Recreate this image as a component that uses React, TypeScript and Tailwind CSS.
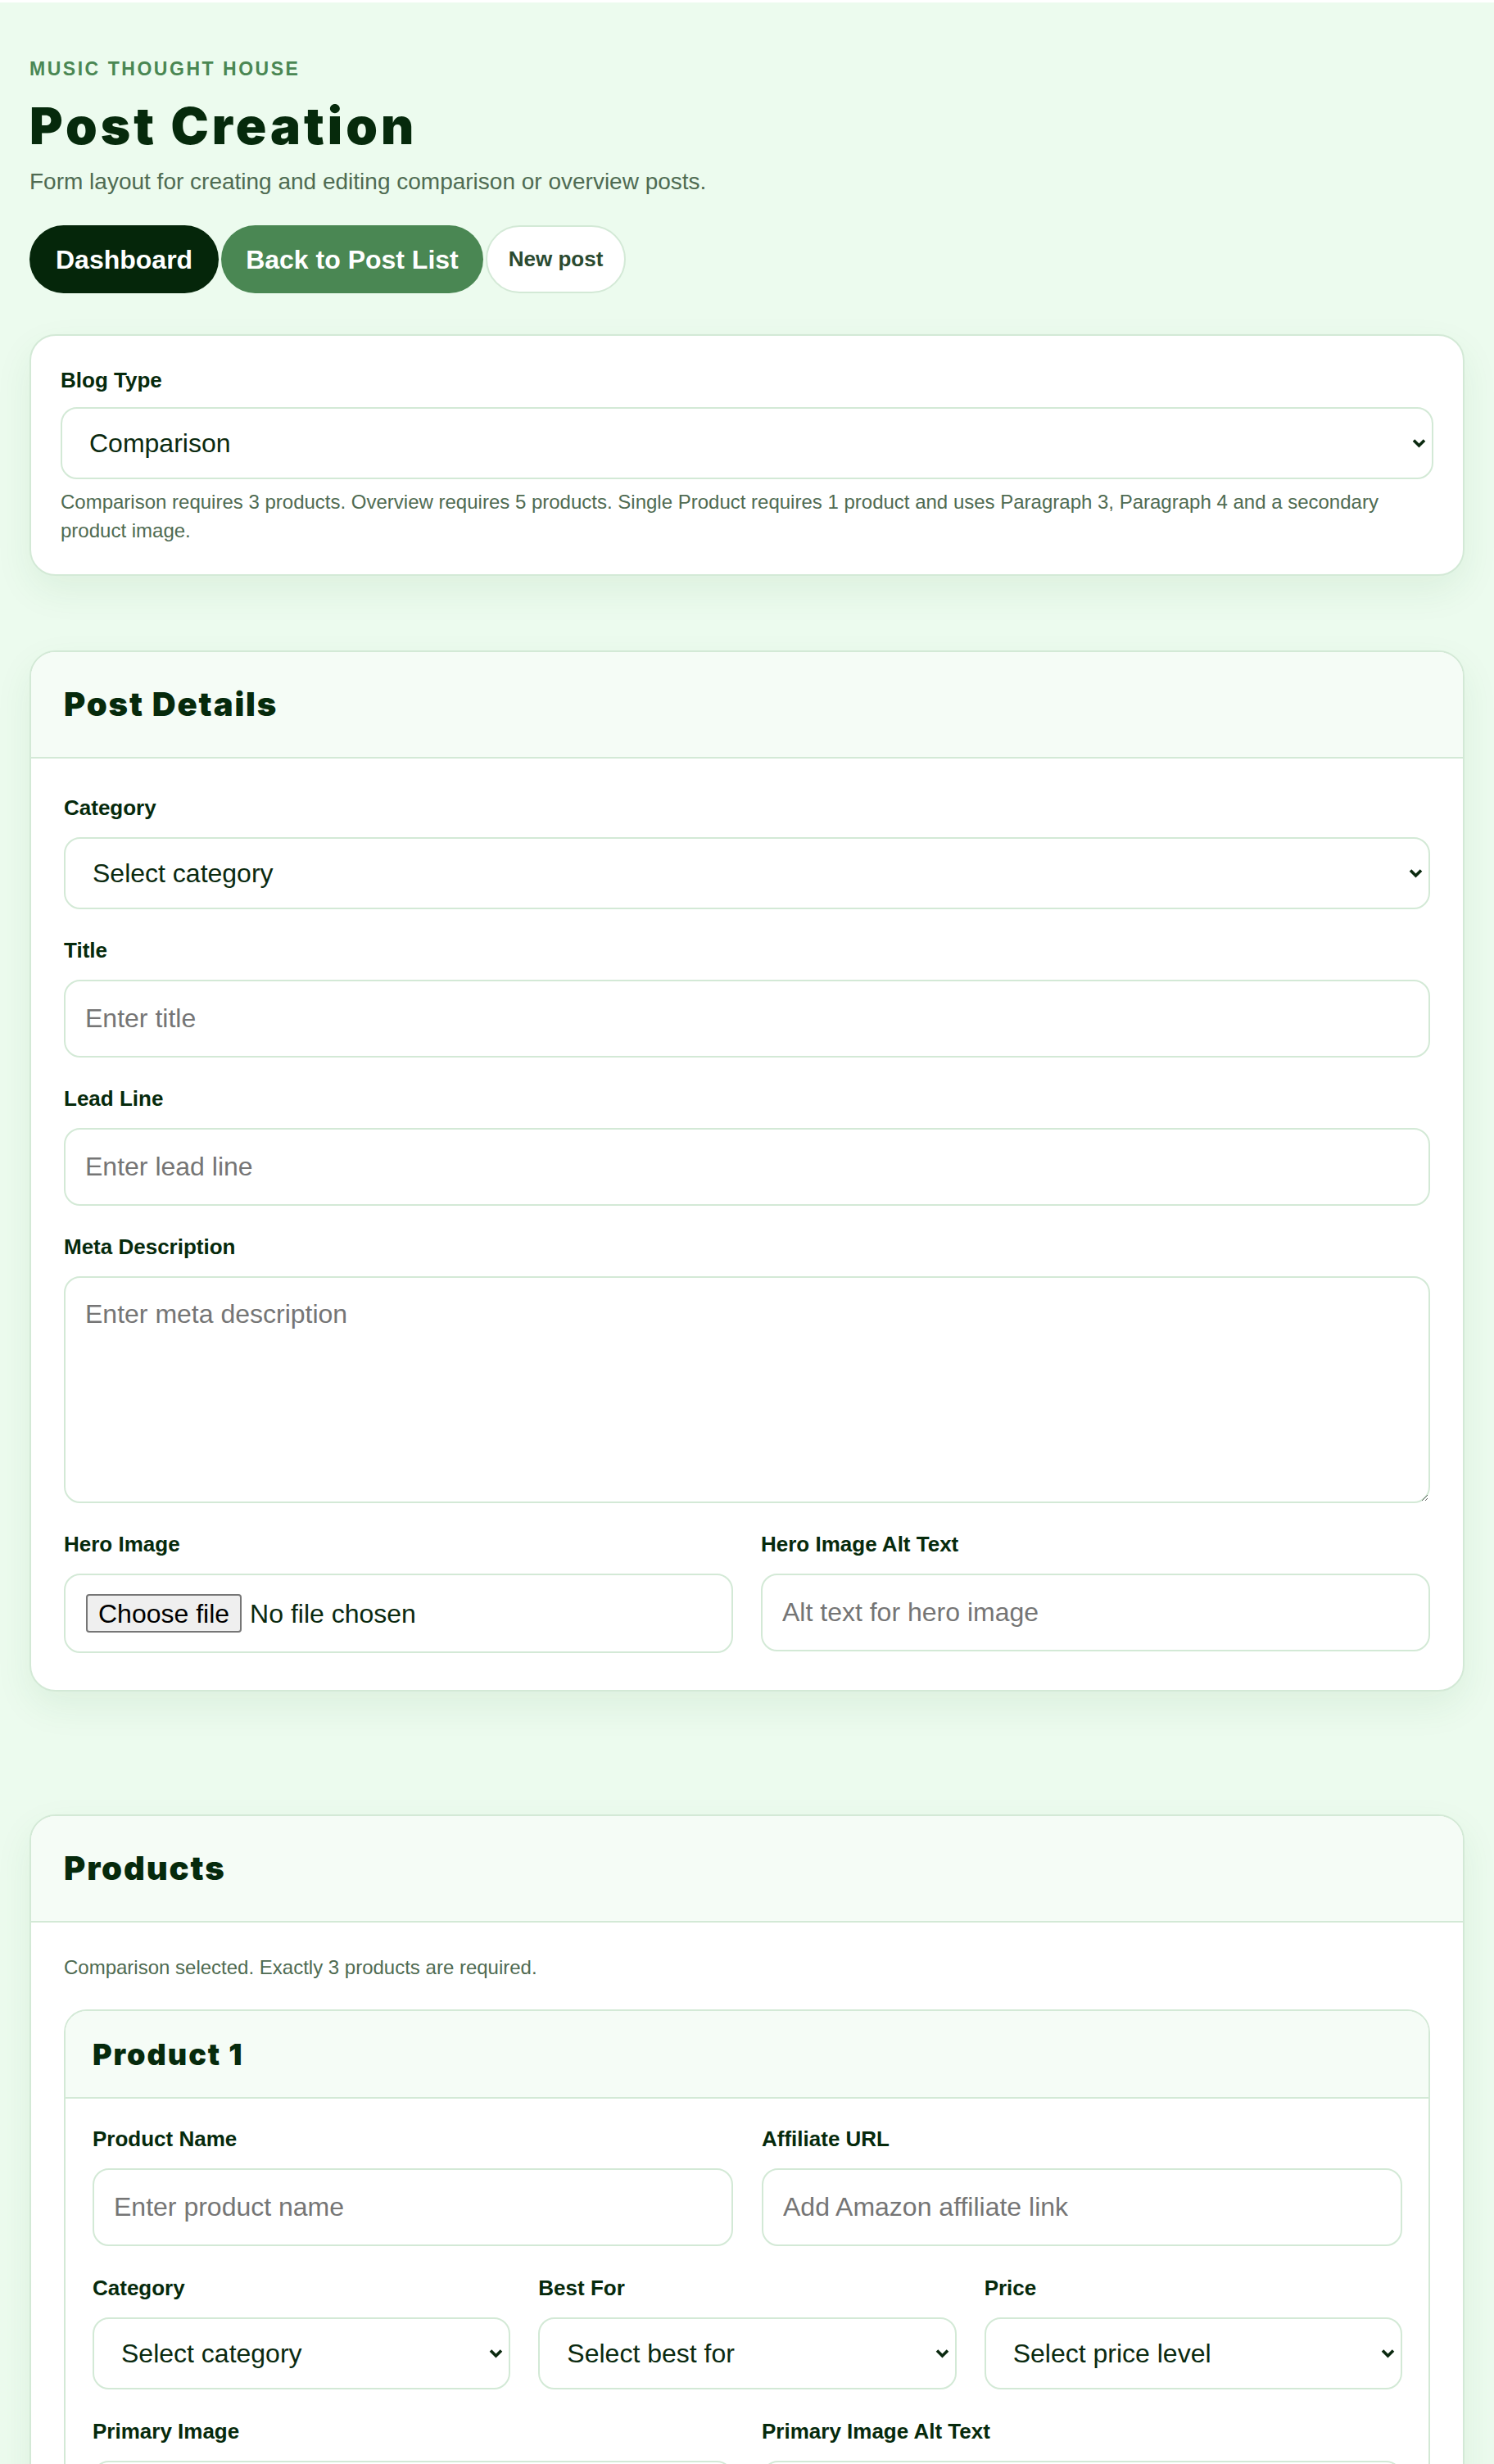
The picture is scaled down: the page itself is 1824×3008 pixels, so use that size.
import React from "react";

// shared field styles
const labelCls =
  "block text-[26px] leading-[36px] font-bold text-[#062a0c] mb-[18px]";
const inputCls =
  "block w-full h-[95px] rounded-[20px] border-2 border-[#d3e9d6] bg-white px-6 text-[32px] text-[#0b2a10] placeholder:text-[#757575] outline-none";
const selectCls =
  "block w-full h-[88px] appearance-none rounded-[20px] border-2 border-[#d3e9d6] bg-white pl-[33px] pr-12 text-[32px] text-[#0b2a10] outline-none";

interface FieldProps {
  label: string;
  children: React.ReactNode;
  className?: string;
}

const Field: React.FC<FieldProps> = ({ label, children, className }) => (
  <div className={className}>
    <label className={labelCls}>{label}</label>
    {children}
  </div>
);

const Select: React.FC<{ options: string[]; defaultValue?: string }> = ({ options, defaultValue }) => (
  <div className="relative">
    <select className={selectCls} defaultValue={defaultValue ?? options[0]}>
      {options.map((o) => (
        <option key={o} value={o}>
          {o}
        </option>
      ))}
    </select>
    <svg
      className="pointer-events-none absolute right-[9px] top-1/2 -translate-y-1/2"
      width="17"
      height="12"
      viewBox="0 0 17 12"
      fill="none"
    >
      <path d="M2 2.5 L8.5 9 L15 2.5" stroke="#0b2a10" strokeWidth="3.6" />
    </svg>
  </div>
);

// file picker drawn like the native control
const FilePicker: React.FC = () => (
  <label className="flex h-[97px] w-full cursor-pointer items-center rounded-[20px] border-2 border-[#d3e9d6] bg-white pl-[25px] text-[32px] text-[#0b2a10]">
    <input type="file" className="hidden" />
    <span className="flex h-[47px] items-center rounded-[4px] border-2 border-[#767676] bg-[#efefef] px-[13px] text-black">
      Choose file
    </span>
    <span className="ml-[10px]">No file chosen</span>
  </label>
);

const Card: React.FC<{ title: string; children: React.ReactNode; className?: string }> = ({
  title,
  children,
  className,
}) => (
  <section
    className={
      "overflow-hidden rounded-[32px] border-2 border-[#d3e9d6] bg-white shadow-[0_18px_45px_rgba(40,120,55,0.08)] " +
      (className || "")
    }
  >
    <div className="flex h-[130px] items-center border-b-2 border-[#d3e9d6] bg-[#f5fcf6] px-10">
      <h2 className="font-[family-name:Inter,sans-serif] text-[40px] font-black tracking-[0.047em] text-[#062a0c]">
        {title}
      </h2>
    </div>
    {children}
  </section>
);

const App: React.FC = () => {
  return (
    <div className="min-h-screen border-t-[3px] border-white bg-[#ecfbee] font-[family-name:'Liberation_Sans',Arial,sans-serif]">
      <div className="px-9 pt-[67px] pb-24">
        {/* page header */}
        <p className="text-[23px] leading-[28px] font-bold uppercase tracking-[0.11em] text-[#4a8753]">
          Music Thought House
        </p>
        <h1 className="mt-[22px] font-[family-name:Inter,sans-serif] text-[62px] leading-[68px] font-black tracking-[0.065em] text-[#062a0c]">
          Post Creation
        </h1>
        <p className="mt-[14px] text-[28px] leading-[40px] text-[#4f6b52]">
          Form layout for creating and editing comparison or overview posts.
        </p>
        <div className="mt-[33px] flex items-center gap-[3px]">
          <a className="flex h-[83px] items-center rounded-full bg-[#05260a] px-[32px] text-[32px] font-bold text-white">
            Dashboard
          </a>
          <a className="flex h-[83px] items-center rounded-full bg-[#4a8753] px-[30px] text-[32px] font-bold text-white">
            Back to Post List
          </a>
          <a className="flex h-[83px] items-center rounded-full border-2 border-[#d3e9d6] bg-white px-[26px] text-[26px] font-bold text-[#2b4a30]">
            New post
          </a>
        </div>

        {/* blog type */}
        <section className="mt-[50px] rounded-[32px] border-2 border-[#d3e9d6] bg-white p-9 shadow-[0_18px_45px_rgba(40,120,55,0.08)]">
          <label className="mb-[15px] block text-[26px] leading-[36px] font-bold text-[#062a0c]">
            Blog Type
          </label>
          <Select options={["Comparison", "Overview", "Single Product"]} />
          <p className="mt-[10px] text-[24px] leading-[35px] text-[#4f6b52]">
            Comparison requires 3 products. Overview requires 5 products. Single Product requires 1
            product and uses Paragraph 3, Paragraph 4 and a secondary product image.
          </p>
        </section>

        {/* post details */}
        <Card title="Post Details" className="mt-[91px]">
          <div className="flex flex-col gap-8 px-10 pt-[42px] pb-[45px]">
            <Field label="Category">
              <Select options={["Select category"]} />
            </Field>
            <Field label="Title">
              <input className={inputCls} placeholder="Enter title" />
            </Field>
            <Field label="Lead Line">
              <input className={inputCls} placeholder="Enter lead line" />
            </Field>
            <Field label="Meta Description">
              <textarea
                className="block h-[277px] w-full rounded-[20px] border-2 border-[#d3e9d6] bg-white px-6 py-[20px] text-[32px] text-[#0b2a10] placeholder:text-[#757575] outline-none"
                placeholder="Enter meta description"
              />
            </Field>
            <div className="grid grid-cols-2 gap-[34px]">
              <Field label="Hero Image">
                <FilePicker />
              </Field>
              <Field label="Hero Image Alt Text">
                <input className={inputCls} placeholder="Alt text for hero image" />
              </Field>
            </div>
          </div>
        </Card>

        {/* products */}
        <Card title="Products" className="mt-[150px]">
          <div className="px-10 pt-[38px] pb-10">
            <p className="text-[24px] leading-[33px] text-[#4f6b52]">
              Comparison selected. Exactly 3 products are required.
            </p>
            <div className="mt-[35px] overflow-hidden rounded-[28px] border-2 border-[#d3e9d6] bg-white">
              <div className="flex h-[107px] items-center border-b-2 border-[#d3e9d6] bg-[#f5fcf6] px-[33px]">
                <h3 className="font-[family-name:Inter,sans-serif] text-[36px] font-black tracking-[0.055em] text-[#062a0c]">
                  Product 1
                </h3>
              </div>
              <div className="flex flex-col gap-[33px] pt-[31px] pb-10 pl-[33px] pr-[32px]">
                <div className="grid grid-cols-2 gap-[35px]">
                  <Field label="Product Name">
                    <input className={inputCls} placeholder="Enter product name" />
                  </Field>
                  <Field label="Affiliate URL">
                    <input className={inputCls} placeholder="Add Amazon affiliate link" />
                  </Field>
                </div>
                <div className="grid grid-cols-3 gap-[34px]">
                  <Field label="Category">
                    <Select options={["Select category"]} />
                  </Field>
                  <Field label="Best For">
                    <Select options={["Select best for"]} />
                  </Field>
                  <Field label="Price">
                    <Select options={["Select price level"]} />
                  </Field>
                </div>
                <div className="grid grid-cols-2 gap-[35px]">
                  <Field label="Primary Image">
                    <FilePicker />
                  </Field>
                  <Field label="Primary Image Alt Text">
                    <input className={inputCls} placeholder="Alt text for primary image" />
                  </Field>
                </div>
              </div>
            </div>
          </div>
        </Card>
      </div>
    </div>
  );
};

export default App;
